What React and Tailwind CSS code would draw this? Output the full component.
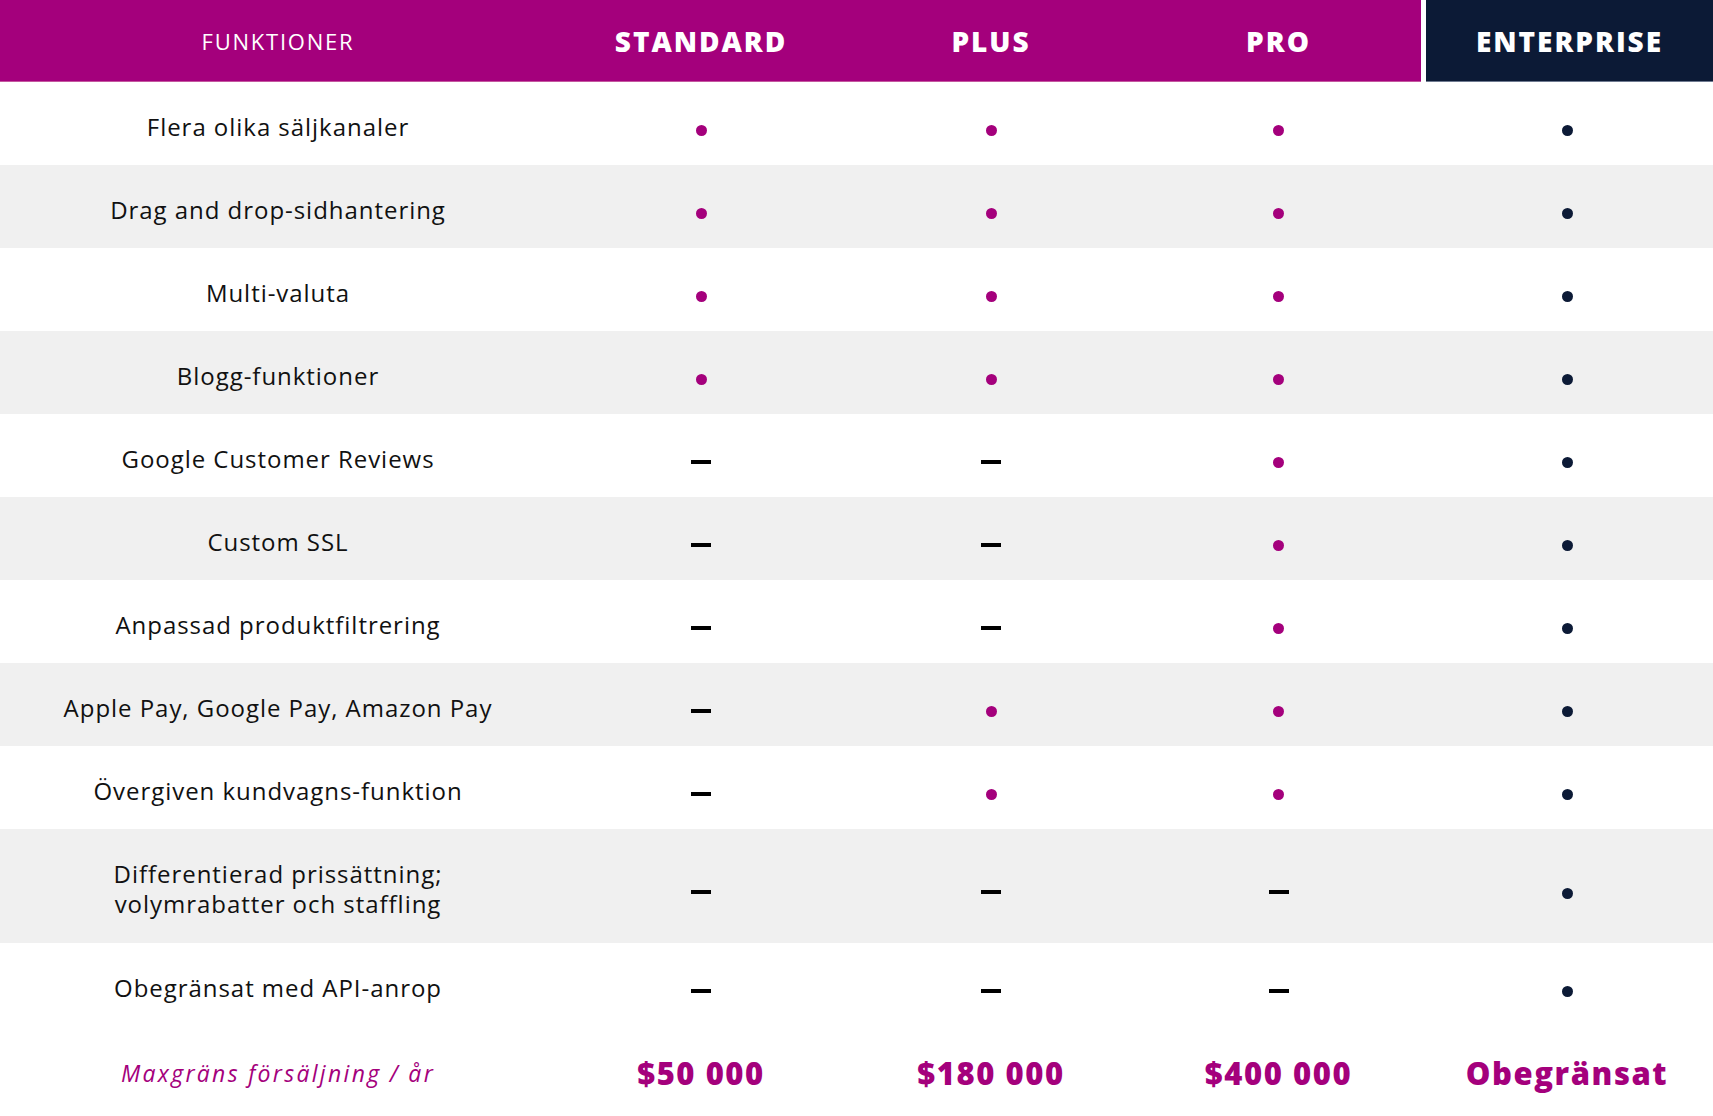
import React from 'react';

const PURPLE = 'bg-[#a4007c]';

// y = included (dot), n = not included (dash)
const rows = [
  { label: 'Flera olika säljkanaler', v: ['y', 'y', 'y', 'y'] },
  { label: 'Drag and drop-sidhantering', v: ['y', 'y', 'y', 'y'] },
  { label: 'Multi-valuta', v: ['y', 'y', 'y', 'y'] },
  { label: 'Blogg-funktioner', v: ['y', 'y', 'y', 'y'] },
  { label: 'Google Customer Reviews', v: ['n', 'n', 'y', 'y'] },
  { label: 'Custom SSL', v: ['n', 'n', 'y', 'y'] },
  { label: 'Anpassad produktfiltrering', v: ['n', 'n', 'y', 'y'] },
  { label: 'Apple Pay, Google Pay, Amazon Pay', v: ['n', 'y', 'y', 'y'] },
  { label: 'Övergiven kundvagns-funktion', v: ['n', 'y', 'y', 'y'] },
  { label: ['Differentierad prissättning;', 'volymrabatter och staffling'], v: ['n', 'n', 'n', 'y'], tall: true },
  { label: 'Obegränsat med API-anrop', v: ['n', 'n', 'n', 'y'] },
];

const prices = ['$50 000', '$180 000', '$400 000', 'Obegränsat'];

function Mark({ value, enterprise }) {
  if (value === 'n') {
    return <span className="block w-5 h-1 mt-[2px] bg-black" />;
  }
  return (
    <span
      className={
        'block w-[11px] h-[11px] mt-[4px] rounded-full ' +
        (enterprise ? 'bg-[#0c1a36]' : 'bg-[#a4007c]')
      }
    />
  );
}

export default function App() {
  const cols = 'grid grid-cols-[556px_290px_290px_285px_1fr]';
  const planHead = PURPLE + ' flex items-center justify-center pt-[1px] text-[28px] font-extrabold tracking-[0.07em] border-b border-[#c4579f]';

  return (
    <div className="w-[1713px] h-[1116px] bg-white font-['Open_Sans',sans-serif] text-[#111111]">
      {/* header */}
      <div className={cols + ' h-[82px] text-white'}>
        <div className={PURPLE + ' flex items-center justify-center pt-[1px] text-[22px] tracking-[0.08em] border-b border-[#c4579f]'}>
          FUNKTIONER
        </div>
        <div className={planHead}>STANDARD</div>
        <div className={planHead}>PLUS</div>
        <div className={planHead}>PRO</div>
        <div className="bg-[#0c1a36] border-l-[5px] border-white flex">
          <span className="w-full h-full flex items-center justify-center pt-[1px] text-[28px] font-extrabold tracking-[0.07em] border-b border-[#6f7a90]">
            ENTERPRISE
          </span>
        </div>
      </div>

      {/* feature rows */}
      {rows.map((row, i) => (
        <div
          key={i}
          className={
            cols +
            ' pt-[10px] ' +
            (row.tall ? 'h-[114px] ' : 'h-[83px] ') +
            (i % 2 === 1 ? 'bg-[#f0f0f0]' : 'bg-white')
          }
        >
          <div className="flex flex-col items-center justify-center pb-[4px] text-center text-[24px] leading-[30px] tracking-[0.04em]">
            {Array.isArray(row.label) ? row.label.map((l) => <span key={l}>{l}</span>) : row.label}
          </div>
          {row.v.map((v, j) => (
            <div key={j} className="flex items-center justify-center">
              <Mark value={v} enterprise={j === 3} />
            </div>
          ))}
        </div>
      ))}

      {/* price row */}
      <div className={cols + ' h-[89px] pt-[6px] text-[#a4007c]'}>
        <div className="flex items-center justify-center text-[23px] italic tracking-[0.1em]">
          Maxgräns försäljning / år
        </div>
        {prices.map((p) => (
          <div key={p} className="flex items-center justify-center text-[31px] font-extrabold tracking-[0.05em]">
            {p}
          </div>
        ))}
      </div>
    </div>
  );
}
